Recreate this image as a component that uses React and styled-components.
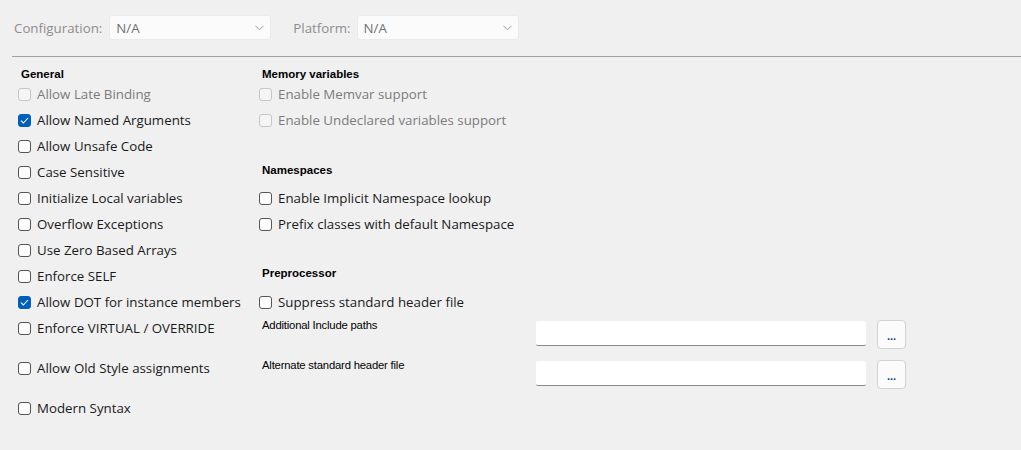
import React from 'react';
import styled, { createGlobalStyle } from 'styled-components';

const GlobalStyle = createGlobalStyle`
  html, body {
    margin: 0;
    padding: 0;
    background: #f0f0f0;
  }
  body {
    font-family: "Open Sans", "Noto Sans", sans-serif;
  }
`;

const Page = styled.div`
  width: 1021px;
  height: 450px;
  background: #f0f0f0;
  overflow: hidden;
`;

const Toolbar = styled.div`
  display: flex;
  align-items: center;
  height: 25px;
  padding: 15px 0 0 14px;
`;

const ToolLabel = styled.span`
  font-size: 13.3px;
  color: #8d8d8d;
  margin-right: ${p => p.$gap}px;
`;

const Combo = styled.div`
  display: flex;
  align-items: center;
  justify-content: space-between;
  box-sizing: border-box;
  width: 162px;
  height: 25px;
  padding: 0 6px 0 6px;
  background: #fbfbfb;
  border: 1px solid #ebebeb;
  border-radius: 3px;
  margin-right: 22px;
  font-size: 13.3px;
  color: #707070;
`;

const Divider = styled.div`
  margin: 16px 0 0 12px;
  height: 1px;
  background: #a0a0a0;
`;

const Columns = styled.div`
  display: grid;
  grid-template-columns: 241px 1fr;
  padding: 7px 0 0 18px;
`;

const Column = styled.div`
  display: flex;
  flex-direction: column;
`;

const Heading = styled.div`
  font-family: "Liberation Sans", Arial, sans-serif;
  font-weight: bold;
  font-size: 11.5px;
  color: #000;
  height: 17px;
  line-height: 20px;
  padding-left: 3px;
  margin-top: ${p => p.$gap || 0}px;
  margin-bottom: ${p => p.$after || 0}px;
`;

const CheckRow = styled.label`
  box-sizing: border-box;
  display: flex;
  align-items: center;
  height: ${p => (p.$tall ? 40 : 26)}px;
  padding-top: ${p => (p.$tall ? 14 : 0)}px;
  font-size: 13.3px;
  color: ${p => (p.$disabled ? '#7c7c7c' : '#1a1a1a')};
  white-space: nowrap;
`;

const Box = styled.span`
  box-sizing: border-box;
  width: 13px;
  height: 13px;
  margin-right: 6px;
  border-radius: 3px;
  display: flex;
  align-items: center;
  justify-content: center;
  background: ${p => (p.$checked ? '#005fb8' : p.$disabled ? '#f5f5f5' : '#fdfdfd')};
  border: 1px solid ${p => (p.$checked ? '#005fb8' : p.$disabled ? '#c6c6c6' : '#555')};
`;

const PathRow = styled.div`
  display: flex;
  align-items: flex-start;
  height: 40px;
  margin-top: ${p => p.$offset || 0}px;
`;

const PathLabel = styled.div`
  font-family: "Liberation Sans", Arial, sans-serif;
  font-size: 11.3px;
  letter-spacing: -0.2px;
  color: #000;
  width: 274px;
  padding: 1px 0 0 3px;
`;

const TextBox = styled.div`
  box-sizing: border-box;
  width: 330px;
  height: 25px;
  margin-top: 3px;
  background: #fff;
  border-radius: 2px;
  border-bottom: 1px solid #8a8a8a;
`;

const BrowseButton = styled.div`
  box-sizing: border-box;
  width: 29px;
  height: 29px;
  margin: 2px 0 0 11px;
  background: #fbfbfb;
  border: 1px solid #d2d2d2;
  border-radius: 4px;
  display: flex;
  align-items: center;
  justify-content: center;
  font-family: "Liberation Sans", Arial, sans-serif;
  font-weight: bold;
  font-size: 11px;
  color: #003e7e;
  padding-top: 2px;
`;

const Chevron = () => (
  <svg width="9" height="6" viewBox="0 0 9 6">
    <path d="M0.5 0.8 L4.5 4.8 L8.5 0.8" fill="none" stroke="#9a9a9a" strokeWidth="1" />
  </svg>
);

const Check = ({ checked, disabled, children, tall }) => (
  <CheckRow $disabled={disabled} $tall={tall}>
    <Box $checked={checked} $disabled={disabled}>
      {checked && (
        <svg width="9" height="7" viewBox="0 0 9 7">
          <path d="M1 3.6 L3.4 6 L8 1" fill="none" stroke="#fff" strokeWidth="1.1" />
        </svg>
      )}
    </Box>
    {children}
  </CheckRow>
);

const PathField = ({ label, offset }) => (
  <PathRow $offset={offset}>
    <PathLabel>{label}</PathLabel>
    <TextBox />
    <BrowseButton>...</BrowseButton>
  </PathRow>
);

export default function App() {
  return (
    <Page>
      <GlobalStyle />
      <Toolbar>
        <ToolLabel $gap={7}>Configuration:</ToolLabel>
        <Combo>N/A<Chevron /></Combo>
        <ToolLabel $gap={6}>Platform:</ToolLabel>
        <Combo>N/A<Chevron /></Combo>
      </Toolbar>
      <Divider />
      <Columns>
        <Column>
          <Heading>General</Heading>
          <Check disabled>Allow Late Binding</Check>
          <Check checked>Allow Named Arguments</Check>
          <Check>Allow Unsafe Code</Check>
          <Check>Case Sensitive</Check>
          <Check>Initialize Local variables</Check>
          <Check>Overflow Exceptions</Check>
          <Check>Use Zero Based Arrays</Check>
          <Check>Enforce SELF</Check>
          <Check checked>Allow DOT for instance members</Check>
          <Check>Enforce VIRTUAL / OVERRIDE</Check>
          <Check tall>Allow Old Style assignments</Check>
          <Check tall>Modern Syntax</Check>
        </Column>
        <Column>
          <Heading>Memory variables</Heading>
          <Check disabled>Enable Memvar support</Check>
          <Check disabled>Enable Undeclared variables support</Check>
          <Heading $gap={27} $after={8}>Namespaces</Heading>
          <Check>Enable Implicit Namespace lookup</Check>
          <Check>Prefix classes with default Namespace</Check>
          <Heading $gap={26} $after={9}>Preprocessor</Heading>
          <Check>Suppress standard header file</Check>
          <PathField offset={3} label="Additional Include paths" />
          <PathField label="Alternate standard header file" />
        </Column>
      </Columns>
    </Page>
  );
}
